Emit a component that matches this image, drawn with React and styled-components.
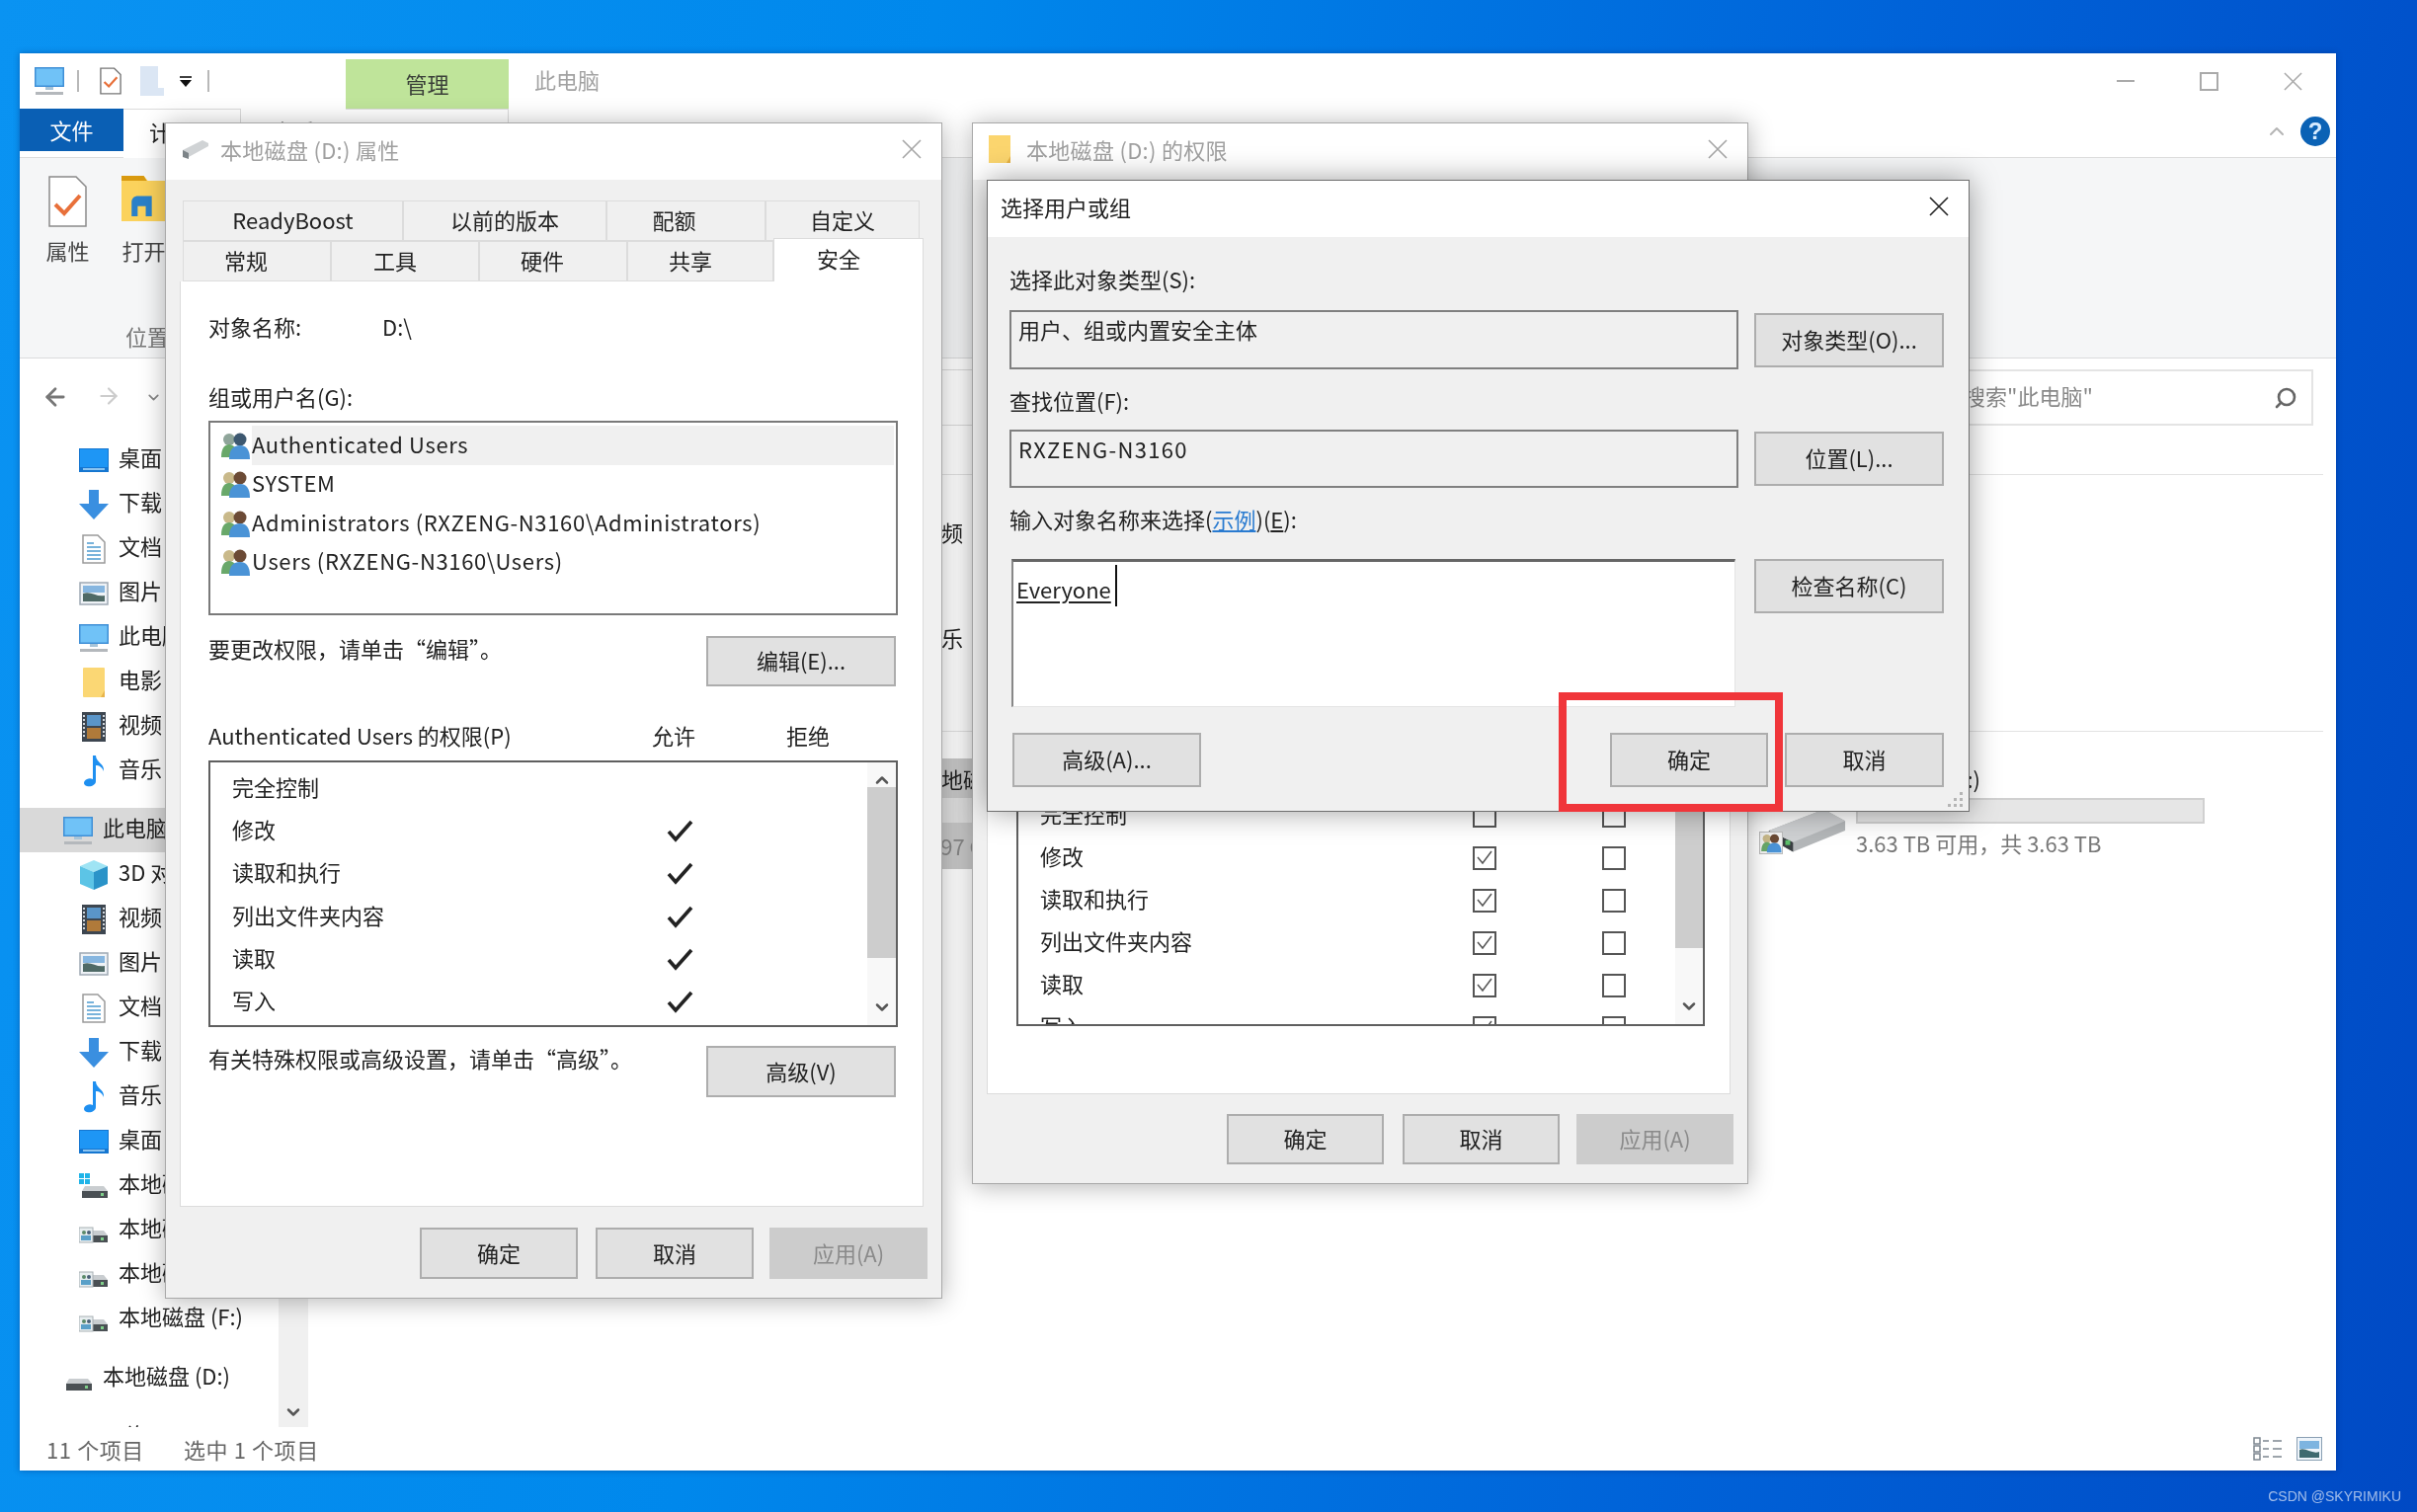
import React from "react";
import styled, { createGlobalStyle } from "styled-components";
import { ArrowLeft, ArrowRight, ChevronDown, ChevronUp, Search } from "lucide-react";

const GlobalStyle = createGlobalStyle`
    html, body {
        margin: 0;
        padding: 0;
        background: #0a6fe0;
    }
    * {
        box-sizing: border-box;
    }
`;

/* ---------- small drawings ---------- */

const CloseGlyph = ({ color = "#999", size = 20 }) => (
    <svg width={size} height={size} viewBox="0 0 20 20" fill="none" stroke={color} strokeWidth="1.6">
        <path d="M1 1 L19 19 M19 1 L1 19" />
    </svg>
);

const CheckMark = () => (
    <svg width="27" height="23" viewBox="0 0 27 23" fill="none" stroke="#222" strokeWidth="3.6">
        <path d="M2 12 L9 20 L25 2" />
    </svg>
);

const BoxTick = () => (
    <svg width="20" height="19" viewBox="0 0 20 19" fill="none" stroke="#555" strokeWidth="1.5">
        <path d="M3 9 L8 15 L17 3" />
    </svg>
);

const UsersIcon = ({ dim }) => (
    <svg width="30" height="30" viewBox="0 0 30 30">
        <circle cx="9" cy="9" r="6" fill={dim ? "#8fa59a" : "#c9b98a"} />
        <path d="M1 27 C1 17 5 14 9 14 C13 14 17 17 17 27 Z" fill="#69a86a" />
        <circle cx="20" cy="9" r="6.5" fill={dim ? "#3d5870" : "#6b4a35"} />
        <path d="M9 29 C9 18 14 15 20 15 C26 15 30 19 30 29 Z" fill="#4a93d6" />
    </svg>
);

const Monitor = ({ w = 30, h = 28 }) => (
    <svg width={w} height={h} viewBox="0 0 30 28">
        <rect x="0" y="0" width="30" height="20" fill="#3f8fd6" />
        <rect x="1.5" y="1.5" width="27" height="17" fill="#70c2f7" />
        <rect x="11" y="20" width="8" height="3" fill="#a8c4d8" />
        <rect x="1" y="25" width="28" height="3" fill="#b4b8bc" />
    </svg>
);

const DesktopIcon = () => (
    <svg width="30" height="24" viewBox="0 0 30 24">
        <rect width="30" height="24" fill="#1576d0" />
        <rect x="1" y="1" width="28" height="18" fill="#1e96f5" />
        <rect x="4" y="20" width="22" height="2" fill="#8cc4f0" />
    </svg>
);

const DownloadIcon = () => (
    <svg width="30" height="30" viewBox="0 0 30 30">
        <path d="M10 0 H20 V14 H30 L15 30 L0 14 H10 Z" fill="#3a8fe0" />
    </svg>
);

const DocIcon = () => (
    <svg width="24" height="30" viewBox="0 0 24 30">
        <path d="M1 1 H16 L23 8 V29 H1 Z" fill="#fff" stroke="#9a9a9a" strokeWidth="1.5" />
        <path d="M5 9 H12 M5 13 H19 M5 17 H19 M5 21 H19 M5 25 H19" stroke="#4c9bd0" strokeWidth="1.6" />
    </svg>
);

const PictureIcon = () => (
    <svg width="30" height="24" viewBox="0 0 30 24">
        <rect x="1" y="1" width="28" height="22" fill="#eef2f6" stroke="#9fa9b4" strokeWidth="1.5" />
        <rect x="4" y="4" width="22" height="7" fill="#86b6e0" />
        <path d="M4 12 C12 9 18 16 26 14 V20 H4 Z" fill="#4f6a66" />
    </svg>
);

const FolderIcon = () => (
    <svg width="24" height="32" viewBox="0 0 24 32">
        <rect x="1" y="1" width="22" height="30" rx="1" fill="#fbd774" />
        <path d="M19 31 L23 24 V31 Z" fill="#e8b44a" />
    </svg>
);

const FilmIcon = () => (
    <svg width="24" height="30" viewBox="0 0 24 30">
        <rect width="24" height="30" fill="#3d4650" />
        <rect x="5" y="3" width="14" height="11" fill="#5a95c8" />
        <rect x="5" y="16" width="14" height="11" fill="#b07a3a" />
        <path d="M2 3 V27 M22 3 V27" stroke="#d0d6dc" strokeWidth="2" strokeDasharray="2 2" />
    </svg>
);

const MusicIcon = () => (
    <svg width="24" height="34" viewBox="0 0 24 34">
        <path d="M11 1 H14 C14 8 23 9 22 17 C20 12 17 11 14 11 V27 C14 31 9 33 5 32 C1 31 1 27 5 25 C7 24 9 24 11 25 Z" fill="#1e8ff0" />
    </svg>
);

const CubeIcon = () => (
    <svg width="30" height="30" viewBox="0 0 30 30">
        <path d="M15 0 L29 6 L15 12 L1 6 Z" fill="#9fe4f4" />
        <path d="M1 6 L15 12 V30 L1 24 Z" fill="#5cc4e6" />
        <path d="M29 6 L15 12 V30 L29 24 Z" fill="#2a93c8" />
    </svg>
);

const DriveIcon = ({ variant }) => (
    <svg width="30" height="26" viewBox="0 0 30 26">
        {variant === "system" && (
            <g fill="#1fb4e8">
                <rect x="0" y="0" width="5" height="5" />
                <rect x="6" y="0" width="5" height="5" />
                <rect x="0" y="6" width="5" height="5" />
                <rect x="6" y="6" width="5" height="5" />
            </g>
        )}
        <path d="M6 13 H25 L29 18 H3 Z" fill="#c9cdd0" />
        <rect x="3" y="18" width="26" height="7" fill="#4a5054" />
        <rect x="22" y="20" width="3" height="3" fill="#7fcf8a" />
        {variant === "share" && (
            <g>
                <rect x="0" y="10" width="14" height="15" fill="#e8eef0" stroke="#a8b0b4" />
                <circle cx="5" cy="15" r="2" fill="#5a8a6a" />
                <circle cx="10" cy="15" r="2" fill="#4a6078" />
                <rect x="2" y="18" width="10" height="5" fill="#5aa0c8" />
            </g>
        )}
    </svg>
);

const navIcons = {
    desktop: <DesktopIcon />,
    download: <DownloadIcon />,
    doc: <DocIcon />,
    picture: <PictureIcon />,
    monitor: <Monitor />,
    folder: <FolderIcon />,
    film: <FilmIcon />,
    music: <MusicIcon />,
    cube: <CubeIcon />,
    system: <DriveIcon variant="system" />,
    share: <DriveIcon variant="share" />,
    drive: <DriveIcon />,
};

const navItems = [
    ["desktop", "桌面"],
    ["download", "下载"],
    ["doc", "文档"],
    ["picture", "图片"],
    ["monitor", "此电脑"],
    ["folder", "电影"],
    ["film", "视频"],
    ["music", "音乐"],
    ["monitor", "此电脑", "top", true],
    ["cube", "3D 对象"],
    ["film", "视频"],
    ["picture", "图片"],
    ["doc", "文档"],
    ["download", "下载"],
    ["music", "音乐"],
    ["desktop", "桌面"],
    ["system", "本地磁盘 (C:)"],
    ["share", "本地磁盘 (E:)"],
    ["share", "本地磁盘 (G:)"],
    ["share", "本地磁盘 (F:)"],
    ["drive", "本地磁盘 (D:)", "top"],
    ["", "网络", "top"],
];

const permRows = ["完全控制", "修改", "读取和执行", "列出文件夹内容", "读取", "写入"];

const App = () => {
    return (
        <Desktop>
            <GlobalStyle />

            <Explorer>
                <QuickBar>
                    <Monitor />
                    <QuickSep $left={13} />
                    <QuickIcon $left={21}>
                        <svg width="22" height="30" viewBox="0 0 24 30">
                            <path d="M1 1 H16 L23 8 V29 H1 Z" fill="#fff" stroke="#777" strokeWidth="1.5" />
                            <path d="M5 16 L10 21 L19 11" fill="none" stroke="#e8703a" strokeWidth="2.4" />
                        </svg>
                    </QuickIcon>
                    <QuickIcon $left={19}>
                        <svg width="24" height="30" viewBox="0 0 24 30">
                            <path d="M0 0 H18 V22 H24 V30 H0 Z" fill="#dbe6f4" />
                        </svg>
                    </QuickIcon>
                    <QuickIcon $left={15}>
                        <svg width="14" height="11" viewBox="0 0 14 11">
                            <path d="M1 1 H13" stroke="#111" strokeWidth="1.6" />
                            <path d="M1 4 H13 L7 11 Z" fill="#111" />
                        </svg>
                    </QuickIcon>
                    <QuickSep $left={15} />
                    <ManageTab>管理</ManageTab>
                    <WindowName>此电脑</WindowName>
                    <WindowControls>
                        <MinGlyph />
                        <MaxGlyph />
                        <CloseGlyph color="#aaa" size={19} />
                    </WindowControls>
                </QuickBar>

                <TabStrip>
                    <FileTab>文件</FileTab>
                    <RibbonTab $width={119}>计算机</RibbonTab>
                    <RibbonTab $width={106} $plain>查看</RibbonTab>
                    <RibbonTab $width={165}>驱动器工具</RibbonTab>
                    <RibbonEnd>
                        <ChevronUp size={24} color="#b5b5b5" strokeWidth={2} />
                        <HelpDot>?</HelpDot>
                    </RibbonEnd>
                </TabStrip>

                <Ribbon>
                    <RibbonGroup>
                        <RibbonItem>
                            <svg width="39" height="52" viewBox="0 0 39 52">
                                <path d="M1 1 H28 L38 11 V51 H1 Z" fill="#fff" stroke="#8a8a8a" strokeWidth="1.5" />
                                <path d="M7 29 L16 38 L32 20" fill="none" stroke="#e8703a" strokeWidth="4" />
                            </svg>
                            <span>属性</span>
                        </RibbonItem>
                        <RibbonItem>
                            <svg width="47" height="46" viewBox="0 0 44 45">
                                <path d="M0 0 H22 L26 5 H44 V45 H0 Z" fill="#fbd25c" />
                                <path d="M0 0 H22 L25 5 H0 Z" fill="#d99a10" />
                                <path d="M10 40 V26 C10 22 13 20 16 20 H30 V40 H24 V30 H16 V40 Z" fill="#2a80c8" />
                            </svg>
                            <span>打开</span>
                        </RibbonItem>
                    </RibbonGroup>
                    <RibbonGroupName>位置</RibbonGroupName>
                </Ribbon>

                <AddressRow>
                    <ArrowLeft size={28} color="#777" strokeWidth={2.4} />
                    <ArrowRight size={26} color="#ccc" strokeWidth={2} />
                    <ChevronDown size={17} color="#888" strokeWidth={2.4} />
                    <AddressBox />
                    <SearchBox>
                        <span>搜索"此电脑"</span>
                        <SearchGlyph>
                            <Search size={24} color="#666" strokeWidth={2.6} />
                        </SearchGlyph>
                    </SearchBox>
                </AddressRow>

                <Main>
                    <Sidebar>
                        {navItems.map(([icon, label, gap, selected], i) => (
                            <NavRow key={i} $top={gap} $selected={selected} $outer={gap || selected}>
                                <NavIcon>{navIcons[icon]}</NavIcon>
                                <span>{label}</span>
                            </NavRow>
                        ))}
                    </Sidebar>
                    <SideScroll>
                        <ChevronDown size={20} color="#555" strokeWidth={3} />
                    </SideScroll>
                    <Content>
                        <SectionLine $top={37} />
                        <FolderName $top={46}>视频</FolderName>
                        <FolderName $top={85}>音乐</FolderName>
                        <SectionLine $top={84} />
                        <TileRow>
                            <SelectedTile>
                                <TileName>本地磁盘 (C:)</TileName>
                                <TileBar />
                                <TileFree>197 GB 可用</TileFree>
                            </SelectedTile>
                            <DriveTile>
                                <BigDrive>
                                    <svg width="84" height="46" viewBox="0 0 86 44">
                                        <path d="M5 22 L62 0 L84 12 V22 L30 44 L5 30 Z" fill="#b4b7b9" />
                                        <path d="M5 22 L30 34 V44 L5 30 Z" fill="#3a3f42" />
                                        <path d="M5 22 L62 0 L84 12 L30 34 Z" fill="#cfd1d3" />
                                        <rect x="22" y="32" width="5" height="5" fill="#5cbf6a" />
                                    </svg>
                                    <ShareBadge>
                                        <UsersIcon />
                                    </ShareBadge>
                                </BigDrive>
                                <DriveInfo>
                                    <TileName>本地磁盘 (F:)</TileName>
                                    <DriveBar />
                                    <DriveFree>3.63 TB 可用，共 3.63 TB</DriveFree>
                                </DriveInfo>
                            </DriveTile>
                        </TileRow>
                    </Content>
                </Main>

                <StatusBar>
                    <span>11 个项目</span>
                    <span>选中 1 个项目</span>
                    <ViewIcons>
                        <svg width="30" height="24" viewBox="0 0 30 24" fill="none" stroke="#7d8790" strokeWidth="1.5">
                            <rect x="1" y="1" width="6" height="6" />
                            <rect x="1" y="9" width="6" height="6" />
                            <rect x="1" y="17" width="6" height="6" />
                            <path d="M10 4 H16 M20 4 H29 M10 12 H16 M20 12 H29 M10 20 H16 M20 20 H29" />
                        </svg>
                        <svg width="26" height="24" viewBox="0 0 26 24">
                            <rect x="0.5" y="0.5" width="25" height="23" fill="#eef4fa" stroke="#8aa0b4" />
                            <rect x="3" y="4" width="20" height="8" fill="#7db4e0" />
                            <path d="M3 13 C9 10 16 18 23 15 V21 H3 Z" fill="#3f6a70" />
                        </svg>
                    </ViewIcons>
                </StatusBar>
            </Explorer>

            {/* 属性 dialog */}
            <Dialog $x={167} $y={124} $w={787} $h={1191}>
                <TitleBar>
                    <svg width="28" height="24" viewBox="0 0 28 24">
                        <path d="M2 13 L22 3 L28 6 V9 L8 20 L2 18 Z" fill="#d0d3d5" />
                        <path d="M2 13 L8 16 V22 L2 20 Z" fill="#7d8488" />
                    </svg>
                    <FadedTitle>本地磁盘 (D:) 属性</FadedTitle>
                    <TitleClose>
                        <CloseGlyph color="#a5a5a5" />
                    </TitleClose>
                </TitleBar>
                <DialogBody>
                    <TabRow>
                        <Tab $width={223}>ReadyBoost</Tab>
                        <Tab $width={206}>以前的版本</Tab>
                        <Tab $width={161} $shift={24}>配额</Tab>
                        <Tab $width={156}>自定义</Tab>
                    </TabRow>
                    <TabRow>
                        <Tab $width={150} $shift={22}>常规</Tab>
                        <Tab $width={150} $shift={20}>工具</Tab>
                        <Tab $width={150} $shift={22}>硬件</Tab>
                        <Tab $width={148} $shift={20}>共享</Tab>
                        <ActiveTab>安全</ActiveTab>
                    </TabRow>
                    <Panel>
                        <ObjectRow>
                            <span>对象名称:</span>
                            <span>D:\</span>
                        </ObjectRow>
                        <FieldLabel $top={49}>组或用户名(G):</FieldLabel>
                        <UserList>
                            <UserRow $active>
                                <UsersIcon dim />
                                <UserName $active>Authenticated Users</UserName>
                            </UserRow>
                            <UserRow>
                                <UsersIcon />
                                <UserName>SYSTEM</UserName>
                            </UserRow>
                            <UserRow>
                                <UsersIcon />
                                <UserName>Administrators (RXZENG-N3160\Administrators)</UserName>
                            </UserRow>
                            <UserRow>
                                <UsersIcon />
                                <UserName>Users (RXZENG-N3160\Users)</UserName>
                            </UserRow>
                        </UserList>
                        <ActionRow $top={21}>
                            <ActionText>要更改权限，请单击“编辑”。</ActionText>
                            <Button $w={192} $h={51}>编辑(E)...</Button>
                        </ActionRow>
                        <PermHeader>
                            <span>Authenticated Users 的权限(P)</span>
                            <span>允许</span>
                            <span />
                            <span>拒绝</span>
                        </PermHeader>
                        <PermList>
                            <PermRows>
                                {permRows.map((label, i) => (
                                    <PermRow key={label}>
                                        <span>{label}</span>
                                        {i > 0 && <CheckMark />}
                                    </PermRow>
                                ))}
                            </PermRows>
                            <ScrollTrack $width={29}>
                                <ChevronUp size={20} color="#555" strokeWidth={3} />
                                <ScrollThumb $height={173} />
                                <ChevronDown size={20} color="#555" strokeWidth={3} />
                            </ScrollTrack>
                        </PermList>
                        <ActionRow $top={19}>
                            <ActionText>有关特殊权限或高级设置，请单击“高级”。</ActionText>
                            <Button $w={192} $h={52}>高级(V)</Button>
                        </ActionRow>
                    </Panel>
                    <Footer $top={21}>
                        <Button $w={160} $h={52}>确定</Button>
                        <Button $w={160} $h={52} $left={18}>取消</Button>
                        <Button $w={160} $h={52} $left={16} $disabled>应用(A)</Button>
                    </Footer>
                </DialogBody>
            </Dialog>

            {/* 权限 dialog */}
            <Dialog $x={984} $y={124} $w={786} $h={1075}>
                <TitleBar>
                    <svg width="24" height="30" viewBox="0 0 24 30">
                        <rect x="1" y="1" width="22" height="28" fill="#fbd56e" />
                        <path d="M19 29 L23 22 V29 Z" fill="#e6b244" />
                    </svg>
                    <FadedTitle $left={3}>本地磁盘 (D:) 的权限</FadedTitle>
                    <TitleClose>
                        <CloseGlyph color="#a5a5a5" />
                    </TitleClose>
                </TitleBar>
                <DialogBody>
                    <Panel $height={903} $clear>
                        <SharedList>
                            <SharedRows>
                                {permRows.map((label, i) => (
                                    <SharedRow key={label}>
                                        <span>{label}</span>
                                        <TickBox>{i > 0 && <BoxTick />}</TickBox>
                                        <TickBox />
                                    </SharedRow>
                                ))}
                            </SharedRows>
                            <ScrollTrack $width={28}>
                                <span />
                                <ScrollThumb $height={175} />
                                <ChevronDown size={20} color="#555" strokeWidth={3} />
                            </ScrollTrack>
                        </SharedList>
                    </Panel>
                    <Footer $top={20}>
                        <Button $w={159} $h={51}>确定</Button>
                        <Button $w={159} $h={51} $left={19}>取消</Button>
                        <Button $w={159} $h={51} $left={17} $disabled>应用(A)</Button>
                    </Footer>
                </DialogBody>
            </Dialog>

            {/* 选择用户或组 dialog */}
            <Dialog $x={999} $y={182} $w={995} $h={640} $front>
                <TitleBar>
                    <FrontTitle>选择用户或组</FrontTitle>
                    <TitleClose>
                        <CloseGlyph color="#222" />
                    </TitleClose>
                </TitleBar>
                <FormBody>
                    <FormLabel $top={31}>选择此对象类型(S):</FormLabel>
                    <FormRow $top={21}>
                        <ReadOnlyField $height={60}>用户、组或内置安全主体</ReadOnlyField>
                        <Button $w={192} $h={55} $left={16}>对象类型(O)...</Button>
                    </FormRow>
                    <FormLabel $top={20}>查找位置(F):</FormLabel>
                    <FormRow $top={19}>
                        <ReadOnlyField $height={59} $caps>RXZENG-N3160</ReadOnlyField>
                        <Button $w={192} $h={55} $left={16}>位置(L)...</Button>
                    </FormRow>
                    <FormLabel $top={20}>
                        输入对象名称来选择(<ExampleLink>示例</ExampleLink>)(<u>E</u>):
                    </FormLabel>
                    <NameRow>
                        <NameArea>
                            <NameText>Everyone</NameText>
                            <Caret />
                        </NameArea>
                        <Button $w={192} $h={55} $left={19}>检查名称(C)</Button>
                    </NameRow>
                    <FormFooter>
                        <Button $w={191} $h={55}>高级(A)...</Button>
                        <Button $w={160} $h={55} $auto>确定</Button>
                        <Button $w={161} $h={55} $left={17}>取消</Button>
                    </FormFooter>
                </FormBody>
                <Grip>
                    <svg width="16" height="15" viewBox="0 0 16 15" fill="#b5b5b5">
                        <rect x="12" y="0" width="3" height="3" />
                        <rect x="6" y="6" width="3" height="3" />
                        <rect x="12" y="6" width="3" height="3" />
                        <rect x="0" y="12" width="3" height="3" />
                        <rect x="6" y="12" width="3" height="3" />
                        <rect x="12" y="12" width="3" height="3" />
                    </svg>
                </Grip>
            </Dialog>

            <RedFrame />
            <Watermark>CSDN @SKYRIMIKU</Watermark>
        </Desktop>
    );
};

export default App;

const Desktop = styled.div`
    position: relative;
    width: 2447px;
    height: 1531px;
    overflow: hidden;
    filter: blur(0.7px);
    background: linear-gradient(100deg, #0a93f2 0%, #0088ec 35%, #0062d8 72%, #0049c4 100%);
    font-family: "Noto Sans CJK SC", "Noto Sans", sans-serif;
    font-size: 22px;
    line-height: 22px;
    color: #222;
`;

/* ---------- explorer window ---------- */

const Explorer = styled.div`
    position: absolute;
    left: 20px;
    top: 54px;
    width: 2345px;
    height: 1435px;
    display: flex;
    flex-direction: column;
    background: #fff;
    box-shadow: 0 0 6px rgba(0, 40, 110, 0.45);
`;

const QuickBar = styled.div`
    height: 56px;
    flex: none;
    display: flex;
    align-items: center;
    padding-left: 15px;
`;

const QuickSep = styled.div`
    width: 2px;
    height: 22px;
    margin-left: ${(props) => props.$left}px;
    background: #b8b8b8;
`;

const QuickIcon = styled.div`
    display: flex;
    margin-left: ${(props) => props.$left}px;
`;

const ManageTab = styled.div`
    align-self: flex-end;
    width: 165px;
    height: 50px;
    margin-left: 138px;
    padding-bottom: 3px;
    display: flex;
    align-items: center;
    justify-content: center;
    background: #bfe49a;
    color: #3a3f38;
`;

const WindowName = styled.div`
    margin-left: 26px;
    padding-bottom: 4px;
    color: #a2a2a2;
`;

const WindowControls = styled.div`
    margin-left: auto;
    margin-right: 34px;
    display: flex;
    align-items: center;
    gap: 66px;
`;

const MinGlyph = styled.div`
    width: 18px;
    height: 2px;
    background: #aaa;
`;

const MaxGlyph = styled.div`
    width: 19px;
    height: 19px;
    border: 2px solid #aaa;
`;

const TabStrip = styled.div`
    height: 50px;
    flex: none;
    display: flex;
    align-items: flex-start;
    border-bottom: 1px solid #dcdcdc;
`;

const FileTab = styled.div`
    width: 105px;
    height: 43px;
    padding-bottom: 2px;
    display: flex;
    align-items: center;
    justify-content: center;
    background: #0a5fb4;
    color: #fff;
`;

const RibbonTab = styled.div`
    width: ${(props) => props.$width}px;
    height: 50px;
    padding-top: 11px;
    text-align: center;
    background: #fff;
    ${(props) => (props.$plain ? "" : "border: 1px solid #dcdcdc; border-bottom: none; border-left: none;")}
`;

const RibbonEnd = styled.div`
    margin-left: auto;
    margin-right: 6px;
    display: flex;
    align-items: center;
    gap: 12px;
    height: 50px;
    margin-top: -2px;
`;

const HelpDot = styled.div`
    width: 30px;
    height: 30px;
    border-radius: 50%;
    background: #0b62b5;
    color: #d8ecff;
    font-family: "Liberation Sans", sans-serif;
    font-weight: 700;
    font-size: 24px;
    line-height: 30px;
    text-align: center;
`;

const Ribbon = styled.div`
    height: 202px;
    flex: none;
    padding: 18px 0 0 25px;
    display: flex;
    flex-direction: column;
    background: #f5f6f7;
`;

const RibbonGroup = styled.div`
    display: flex;
    gap: 30px;
`;

const RibbonItem = styled.div`
    width: 47px;
    display: flex;
    flex-direction: column;
    align-items: center;
    justify-content: space-between;
    height: 86px;
    color: #444;
`;

const RibbonGroupName = styled.div`
    margin: 65px 0 0 82px;
    color: #777;
`;

const AddressRow = styled.div`
    height: 81px;
    flex: none;
    display: flex;
    align-items: flex-start;
    padding: 11px 23px 0 22px;
    border-top: 1px solid #dadbdc;
    & > svg {
        margin-top: 14px;
        margin-right: 27px;
    }
    & > svg:nth-child(3) {
        margin-top: 20px;
        margin-right: 9px;
        margin-left: -3px;
    }
`;

const AddressBox = styled.div`
    flex: 1;
    height: 57px;
    border: 1px solid #dcdcdc;
`;

const SearchBox = styled.div`
    width: 366px;
    height: 57px;
    margin-left: 11px;
    padding-left: 10px;
    display: flex;
    align-items: center;
    justify-content: space-between;
    border: 2px solid #e4e4e4;
    color: #888;
    & > span {
        margin-bottom: 6px;
    }
`;

const SearchGlyph = styled.div`
    display: flex;
    margin-right: 14px;
    transform: scaleX(-1);
`;

const Main = styled.div`
    flex: 1;
    min-height: 0;
    display: flex;
    overflow: hidden;
`;

const Sidebar = styled.div`
    width: 262px;
    flex: none;
    overflow: hidden;
`;

const NavRow = styled.div`
    height: 45px;
    margin-top: ${(props) => (props.$top ? "15px" : "0")};
    display: flex;
    align-items: center;
    white-space: nowrap;
    padding-left: ${(props) => (props.$outer ? "44px" : "60px")};
    background: ${(props) => (props.$selected ? "#d9d9d9" : "transparent")};
    & > span {
        margin-bottom: 8px;
    }
`;

const NavIcon = styled.div`
    width: 30px;
    margin-right: 10px;
    flex: none;
    display: flex;
    justify-content: center;
`;

const SideScroll = styled.div`
    width: 30px;
    flex: none;
    display: flex;
    flex-direction: column;
    justify-content: flex-end;
    align-items: center;
    padding-bottom: 5px;
    background: #f0f0f0;
`;

const Content = styled.div`
    flex: 1;
    min-width: 0;
    display: flex;
    flex-direction: column;
`;

const SectionLine = styled.div`
    height: 1px;
    margin-top: ${(props) => props.$top}px;
    margin-right: 13px;
    background: #e3e3e3;
`;

const FolderName = styled.div`
    margin-top: ${(props) => props.$top}px;
    margin-left: 619px;
`;

const TileRow = styled.div`
    margin-top: 27px;
    display: flex;
`;

const SelectedTile = styled.div`
    width: 300px;
    height: 112px;
    margin-left: 488px;
    padding-left: 131px;
    background: #c9c9c9;
`;

const TileName = styled.div`
    line-height: 40px;
    height: 40px;
    white-space: nowrap;
`;

const TileBar = styled.div`
    height: 25px;
    margin-left: -131px;
    background: #e0e0e0;
`;

const TileFree = styled.div`
    line-height: 47px;
    padding-left: 9px;
    white-space: nowrap;
    color: #888;
`;

const DriveTile = styled.div`
    margin-left: 681px;
    display: flex;
    gap: 13px;
`;

const BigDrive = styled.div`
    position: relative;
    width: 85px;
    height: 97px;
    padding: 50px 0 0 5px;
`;

const ShareBadge = styled.div`
    position: absolute;
    left: 0;
    top: 74px;
    width: 24px;
    height: 23px;
    display: flex;
    background: #f2f2f2;
    border: 1px solid #bbb;
    & > svg {
        width: 22px;
        height: 21px;
    }
`;

const DriveInfo = styled.div`
    width: 353px;
`;

const DriveBar = styled.div`
    height: 26px;
    background: #e6e6e6;
    border: 2px solid #d0d0d0;
`;

const DriveFree = styled.div`
    margin-top: 8px;
    color: #777;
    white-space: nowrap;
`;

const StatusBar = styled.div`
    height: 44px;
    flex: none;
    display: flex;
    align-items: center;
    gap: 40px;
    padding: 0 14px 0 27px;
    color: #666;
    letter-spacing: 0.6px;
`;

const ViewIcons = styled.div`
    margin-left: auto;
    display: flex;
    align-items: center;
    gap: 14px;
`;

/* ---------- dialogs ---------- */

const Dialog = styled.div`
    position: absolute;
    left: ${(props) => props.$x}px;
    top: ${(props) => props.$y}px;
    width: ${(props) => props.$w}px;
    height: ${(props) => props.$h}px;
    display: flex;
    flex-direction: column;
    background: #f0f0f0;
    border: 1px solid ${(props) => (props.$front ? "#6f6f6f" : "#a8a8a8")};
    box-shadow: ${(props) =>
        props.$front ? "0 0 28px rgba(0, 0, 0, 0.38)" : "0 2px 24px rgba(0, 0, 0, 0.3)"};
`;

const TitleBar = styled.div`
    height: 57px;
    flex: none;
    display: flex;
    align-items: center;
    padding: 0 20px 5px 15px;
    gap: 12px;
    background: #fff;
`;

const FadedTitle = styled.div`
    margin-left: ${(props) => props.$left || 0}px;
    color: #a0a0a0;
    letter-spacing: 0.3px;
`;

const FrontTitle = styled.div`
    color: #222;
    margin-left: -2px;
`;

const TitleClose = styled.div`
    margin-left: auto;
    display: flex;
`;

const DialogBody = styled.div`
    flex: 1;
    min-height: 0;
    padding: 21px 14px 0 14px;
    display: flex;
    flex-direction: column;
`;

const TabRow = styled.div`
    display: flex;
    margin-left: 3px;
    height: 41px;
    flex: none;
`;

const Tab = styled.div`
    width: ${(props) => props.$width}px;
    height: 41px;
    padding: 0 ${(props) => props.$shift || 0}px 3px 0;
    display: flex;
    align-items: center;
    justify-content: center;
    background: #f0f0f0;
    border: 1px solid #dcdcdc;
`;

const ActiveTab = styled.div`
    width: 152px;
    height: 48px;
    margin-top: -3px;
    padding: 8px 20px 0 0;
    text-align: center;
    background: #fff;
    border: 1px solid #dcdcdc;
    border-bottom: none;
`;

const Panel = styled.div`
    width: 753px;
    height: ${(props) => props.$height || 937}px;
    flex: none;
    padding: 0 25px 0 ${(props) => (props.$clear ? "29px" : "28px")};
    background: #fff;
    border: 1px solid #dcdcdc;
    ${(props) => (props.$clear ? "" : "border-top: none;")}
    margin-top: ${(props) => (props.$clear ? "2px" : "0")};
`;

const ObjectRow = styled.div`
    padding-top: 34px;
    display: flex;
    & > span:first-child {
        width: 176px;
    }
`;

const FieldLabel = styled.div`
    margin-top: ${(props) => props.$top}px;
`;

const UserList = styled.div`
    height: 197px;
    margin-top: 14px;
    padding: 3px 2px;
    background: #fff;
    border: 2px solid #7a7a7a;
`;

const UserRow = styled.div`
    height: 39.5px;
    display: flex;
    align-items: center;
    padding-left: 8px;
    gap: 2px;
`;

const UserName = styled.div`
    flex: 1;
    height: 100%;
    display: flex;
    align-items: center;
    padding-bottom: 4px;
    white-space: nowrap;
    letter-spacing: 0.65px;
    background: ${(props) => (props.$active ? "#f0f0f0" : "transparent")};
`;

const ActionRow = styled.div`
    margin-top: ${(props) => props.$top}px;
    display: flex;
    justify-content: space-between;
    padding-right: 2px;
`;

const ActionText = styled.div`
    padding-top: 1px;
`;

const Button = styled.div`
    width: ${(props) => props.$w}px;
    height: ${(props) => props.$h}px;
    flex: none;
    margin-left: ${(props) => (props.$auto ? "auto" : `${props.$left || 0}px`)};
    padding-bottom: 3px;
    display: flex;
    align-items: center;
    justify-content: center;
    white-space: nowrap;
    background: ${(props) => (props.$disabled ? "#cccccc" : "#e1e1e1")};
    color: ${(props) => (props.$disabled ? "#8a8a8a" : "#222")};
    border: 2px solid ${(props) => (props.$disabled ? "#cccccc" : "#adadad")};
`;

const PermHeader = styled.div`
    margin-top: 38px;
    display: grid;
    grid-template-columns: 449px 44px 92px 44px;
    white-space: nowrap;
`;

const PermList = styled.div`
    height: 270px;
    margin-top: 15px;
    display: flex;
    background: #fff;
    border: 2px solid #5f5f5f;
`;

const PermRows = styled.div`
    flex: 1;
    padding: 5px 0 0 22px;
`;

const PermRow = styled.div`
    height: 43.2px;
    display: grid;
    grid-template-columns: 440px 30px;
    align-items: center;
    & > span {
        margin-bottom: 5px;
    }
`;

const ScrollTrack = styled.div`
    width: ${(props) => props.$width}px;
    flex: none;
    display: flex;
    flex-direction: column;
    align-items: center;
    justify-content: space-between;
    padding: 8px 0;
    background: #f8f8f8;
`;

const ScrollThumb = styled.div`
    width: 100%;
    height: ${(props) => props.$height}px;
    flex: none;
    margin-top: -3px;
    margin-bottom: auto;
    background: #cdcdcd;
`;

const Footer = styled.div`
    margin-top: ${(props) => props.$top}px;
    display: flex;
    justify-content: flex-end;
`;

const SharedList = styled.div`
    height: 259px;
    margin-top: 574px;
    display: flex;
    overflow: hidden;
    border: 2px solid #5f5f5f;
    border-top: none;
`;

const SharedRows = styled.div`
    flex: 1;
    padding: 24px 0 0 22px;
`;

const SharedRow = styled.div`
    height: 43px;
    display: grid;
    grid-template-columns: 438px 24px 24px;
    align-items: center;
    & > span {
        margin-bottom: 5px;
    }
    & > div:last-child {
        margin-left: 107px;
    }
`;

const TickBox = styled.div`
    width: 24px;
    height: 24px;
    display: flex;
    align-items: center;
    justify-content: center;
    border: 2px solid #555;
    background: #fff;
`;

/* ---------- 选择用户或组 ---------- */

const FormBody = styled.div`
    flex: 1;
    min-height: 0;
    padding-left: 22px;
    display: flex;
    flex-direction: column;
`;

const FormLabel = styled.div`
    margin-top: ${(props) => props.$top}px;
`;

const FormRow = styled.div`
    margin-top: ${(props) => props.$top}px;
    display: flex;
    align-items: center;
`;

const ReadOnlyField = styled.div`
    width: 738px;
    height: ${(props) => props.$height}px;
    flex: none;
    padding: 6px 0 0 7px;
    letter-spacing: ${(props) => (props.$caps ? "1.3px" : "0")};
    background: #f0f0f0;
    border: 2px solid #808080;
`;

const ExampleLink = styled.span`
    color: #2a7bd0;
    text-decoration: underline;
`;

const NameRow = styled.div`
    margin-top: 30px;
    display: flex;
    align-items: flex-start;
    margin-left: 2px;
`;

const NameArea = styled.div`
    position: relative;
    width: 733px;
    height: 150px;
    flex: none;
    padding: 16px 0 0 3px;
    background: #fff;
    border-top: 3px solid #666;
    border-left: 2px solid #888;
    border-right: 1px solid #e4e4e4;
    border-bottom: 1px solid #e4e4e4;
`;

const NameText = styled.span`
    text-decoration: underline;
    text-decoration-thickness: 2px;
    text-underline-offset: 3px;
`;

const Caret = styled.div`
    position: absolute;
    left: 103px;
    top: 3px;
    width: 2px;
    height: 42px;
    background: #111;
`;

const FormFooter = styled.div`
    margin-top: 26px;
    margin-left: 3px;
    width: 943px;
    display: flex;
`;

const Grip = styled.div`
    position: absolute;
    right: 5px;
    bottom: 4px;
    display: flex;
`;

const RedFrame = styled.div`
    position: absolute;
    left: 1578px;
    top: 701px;
    width: 227px;
    height: 121px;
    border: 8px solid #f0353a;
`;

const Watermark = styled.div`
    position: absolute;
    right: 16px;
    bottom: 8px;
    color: rgba(255, 255, 255, 0.62);
    font-family: "Liberation Sans", sans-serif;
    font-size: 14px;
    line-height: 16px;
`;
